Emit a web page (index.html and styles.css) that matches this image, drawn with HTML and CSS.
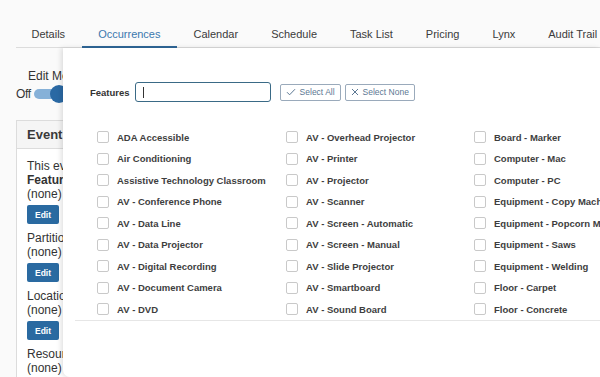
FILE: index.html
```html
<!DOCTYPE html>
<html>
<head>
<meta charset="utf-8">
<link rel="stylesheet" href="styles.css">
</head>
<body>
<nav class="tabs">
  <span class="tab">Details</span>
  <span class="tab active">Occurrences</span>
  <span class="tab">Calendar</span>
  <span class="tab">Schedule</span>
  <span class="tab">Task List</span>
  <span class="tab">Pricing</span>
  <span class="tab">Lynx</span>
  <span class="tab">Audit Trail</span>
</nav>
<div class="page">
  <div class="edit-mode">
    <div class="edit-label">Edit Mode</div>
    <div class="toggle-row">
      <span class="off">Off</span>
      <span class="track"><span class="knob"></span></span>
      <span class="on">On</span>
    </div>
  </div>
  <section class="panel">
    <header class="panel-head">Event Resources</header>
    <div class="panel-body">
      <div class="line">This event has no resources.</div>
      <div class="group">
        <div class="line bold">Features</div>
        <div class="line">(none)</div>
        <button class="edit">Edit</button>
      </div>
      <div class="group">
        <div class="line">Partitions</div>
        <div class="line">(none)</div>
        <button class="edit">Edit</button>
      </div>
      <div class="group">
        <div class="line">Locations</div>
        <div class="line">(none)</div>
        <button class="edit">Edit</button>
      </div>
      <div class="group">
        <div class="line">Resources</div>
        <div class="line">(none)</div>
      </div>
    </div>
  </section>

  <div class="popup">
    <div class="filter">
      <span class="filter-label">Features</span>
      <div class="input"><span class="caret"></span></div>
      <button class="sel">
        <svg width="10" height="8" viewBox="0 0 10 8"><path d="M1 4.2 L3.6 6.8 L9 1.2" fill="none" stroke="#5c7893" stroke-width="1"/></svg>
        Select All
      </button>
      <button class="sel">
        <svg width="8" height="8" viewBox="0 0 8 8"><path d="M1 1 L7 7 M7 1 L1 7" fill="none" stroke="#5c7893" stroke-width="1"/></svg>
        Select None
      </button>
    </div>
    <div class="grid">
      <label class="item"><span class="box"></span>ADA Accessible</label>
      <label class="item"><span class="box"></span>AV - Overhead Projector</label>
      <label class="item"><span class="box"></span>Board - Marker</label>
      <label class="item"><span class="box"></span>Air Conditioning</label>
      <label class="item"><span class="box"></span>AV - Printer</label>
      <label class="item"><span class="box"></span>Computer - Mac</label>
      <label class="item"><span class="box"></span>Assistive Technology Classroom</label>
      <label class="item"><span class="box"></span>AV - Projector</label>
      <label class="item"><span class="box"></span>Computer - PC</label>
      <label class="item"><span class="box"></span>AV - Conference Phone</label>
      <label class="item"><span class="box"></span>AV - Scanner</label>
      <label class="item"><span class="box"></span>Equipment - Copy Machine</label>
      <label class="item"><span class="box"></span>AV - Data Line</label>
      <label class="item"><span class="box"></span>AV - Screen - Automatic</label>
      <label class="item"><span class="box"></span>Equipment - Popcorn Machine</label>
      <label class="item"><span class="box"></span>AV - Data Projector</label>
      <label class="item"><span class="box"></span>AV - Screen - Manual</label>
      <label class="item"><span class="box"></span>Equipment - Saws</label>
      <label class="item"><span class="box"></span>AV - Digital Recording</label>
      <label class="item"><span class="box"></span>AV - Slide Projector</label>
      <label class="item"><span class="box"></span>Equipment - Welding</label>
      <label class="item"><span class="box"></span>AV - Document Camera</label>
      <label class="item"><span class="box"></span>AV - Smartboard</label>
      <label class="item"><span class="box"></span>Floor - Carpet</label>
      <label class="item"><span class="box"></span>AV - DVD</label>
      <label class="item"><span class="box"></span>AV - Sound Board</label>
      <label class="item"><span class="box"></span>Floor - Concrete</label>
    </div>
  </div>
</div>
</body>
</html>
```

FILE: styles.css
```css
* { box-sizing: border-box; }
html, body {
  margin: 0;
  padding: 0;
  width: 600px;
  height: 377px;
  overflow: hidden;
  background: #fafafa;
  font-family: "Liberation Sans", Arial, sans-serif;
  color: #333;
}
.tabs {
  display: flex;
  margin-left: 16px;
  height: 48px;
  border-bottom: 1px solid #dcdcdc;
  align-items: stretch;
}
.tab {
  display: flex;
  align-items: center;
  padding: 21px 16.5px 0;
  font-size: 11px;
  color: #3a3a3a;
  border-bottom: 2px solid transparent;
  margin-bottom: -1px;
  white-space: nowrap;
}
.tab:first-child { padding-left: 15.5px; }
.tab.active {
  color: #3b78ae;
  border-bottom-color: #2f6797;
}
.page {
  position: relative;
  height: 329px;
  padding-left: 16px;
}
.edit-mode {
  padding-top: 21px;
}
.edit-label {
  margin-left: 12px;
  font-size: 12px;
  line-height: 14px;
  color: #333;
}
.toggle-row {
  display: flex;
  align-items: center;
  gap: 3px;
  margin-top: 2px;
  height: 18px;
  font-size: 12px;
}
.off { letter-spacing: -0.3px; }
.track {
  position: relative;
  width: 34px;
  height: 10px;
  border-radius: 5px;
  background: #86b1d8;
}
.knob {
  position: absolute;
  right: 0;
  top: -4px;
  width: 18px;
  height: 18px;
  border-radius: 50%;
  background: #2a69a4;
}
.panel {
  margin-top: 17px;
  width: 300px;
  height: 260px;
  border: 1px solid #dcdcdc;
  border-bottom: none;
  background: #fff;
}
.panel-head {
  height: 28px;
  padding-left: 10px;
  display: flex;
  align-items: center;
  font-size: 13px;
  font-weight: bold;
  color: #3a3a3a;
  background: #f5f5f5;
  border-bottom: 1px solid #dcdcdc;
}
.panel-body {
  padding: 10px 10px 0;
}
.line {
  font-size: 12px;
  line-height: 14px;
  white-space: nowrap;
}
.bold { font-weight: bold; }
.edit {
  display: block;
  margin: 4px 0 7px;
  width: 32px;
  height: 19px;
  padding: 0;
  border: none;
  border-radius: 2px;
  background: #2a6aa1;
  color: #fff;
  font-family: "Liberation Sans", Arial, sans-serif;
  font-size: 8.5px;
  font-weight: bold;
}
.popup {
  position: absolute;
  left: 63px;
  top: 0;
  right: 0;
  bottom: 0;
  background: #fff;
  border-radius: 0 0 0 7px;
  box-shadow: -2px 0 5px rgba(0,0,0,0.12);
}
.filter {
  display: flex;
  align-items: center;
  height: 20px;
  margin-top: 34px;
  padding-left: 27px;
}
.filter-label {
  font-size: 9.5px;
  font-weight: bold;
  color: #333;
  margin-right: 5px;
}
.input {
  width: 136px;
  height: 20px;
  border: 1.5px solid #3a6a86;
  border-radius: 3px;
  display: flex;
  align-items: center;
  padding-left: 7px;
  margin-right: 9px;
}
.caret {
  display: block;
  width: 1px;
  height: 11px;
  background: #333;
}
.sel {
  display: flex;
  align-items: center;
  gap: 4px;
  height: 17px;
  padding: 0 5px;
  margin-right: 4px;
  border: 1px solid #9aaabb;
  border-radius: 2px;
  background: #fff;
  font-family: "Liberation Sans", Arial, sans-serif;
  font-size: 8.5px;
  color: #5c7893;
}
.grid {
  display: grid;
  grid-template-columns: 189px 188px 1fr;
  grid-auto-rows: 21.5px;
  margin-top: 24.5px;
  margin-left: 12px;
  padding-left: 22px;
  border-bottom: 1px solid #e6e6e6;
}
.item {
  display: flex;
  align-items: center;
  font-size: 9.5px;
  font-weight: bold;
  color: #3e3e3e;
  white-space: nowrap;
  overflow: hidden;
}
.box {
  flex: none;
  width: 12px;
  height: 12px;
  border: 1px solid #c9c9c9;
  border-radius: 2px;
  background: #fff;
  margin-right: 8px;
}
```
